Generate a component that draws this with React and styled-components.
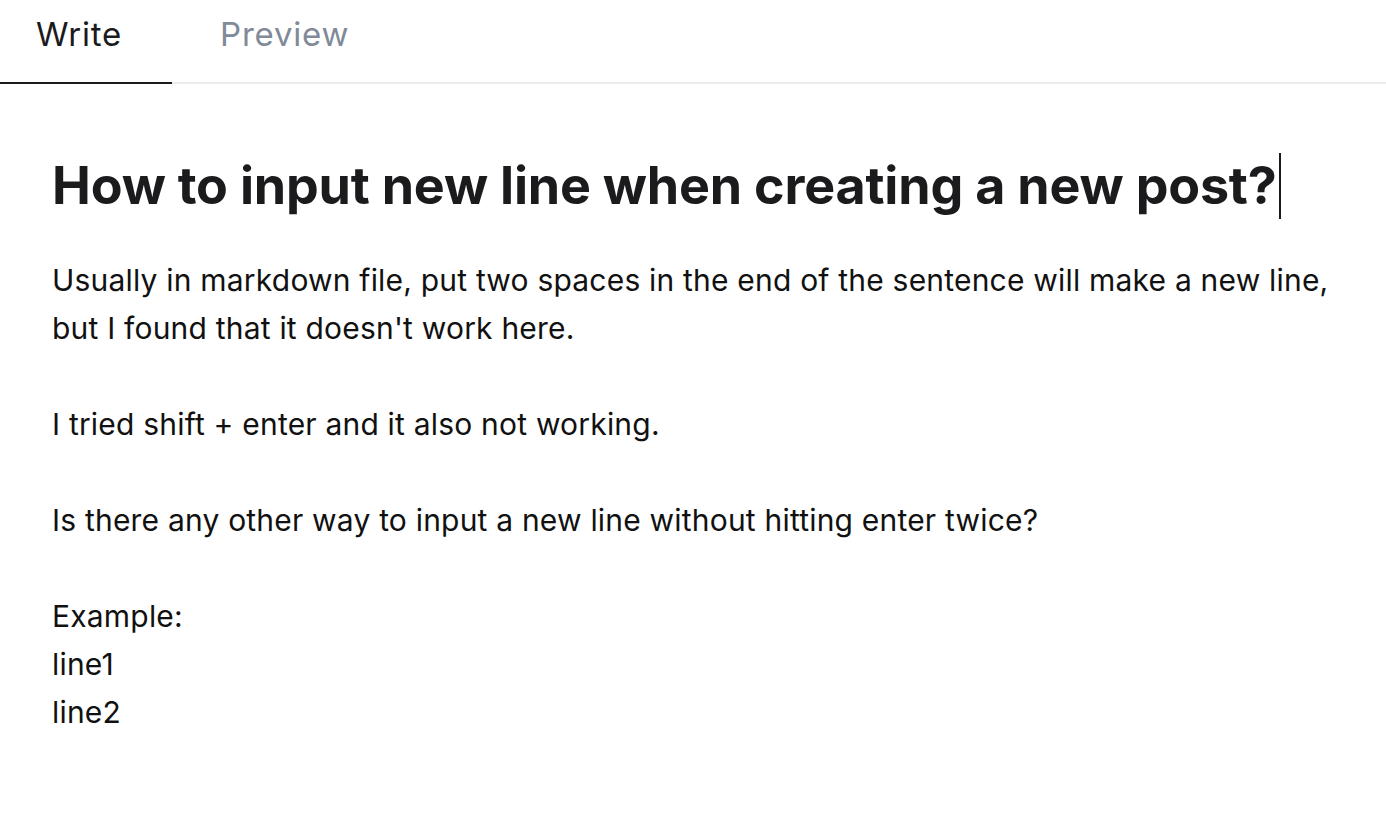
import React from "react";
import styled, { createGlobalStyle } from "styled-components";

const Global = createGlobalStyle`
  html, body { margin: 0; padding: 0; background: #fff; }
  body { font-family: Inter, "Noto Sans", sans-serif; -webkit-font-smoothing: antialiased; }
`;

const Page = styled.div`
  width: 1386px;
  height: 832px;
  background: #fff;
  overflow: hidden;
`;

const TabBar = styled.div`
  display: flex;
  height: 82px;
  border-bottom: 2px solid #ebebeb;
`;

const Tab = styled.div`
  width: ${(p) => p.$w}px;
  display: flex;
  align-items: center;
  box-sizing: border-box;
  padding-left: ${(p) => p.$pl}px;
  padding-bottom: 14px;
  font-size: 33px;
  letter-spacing: 0.8px;
  font-weight: 400;
  color: ${(p) => (p.$active ? "#1b1b1d" : "#808a98")};
  border-bottom: 2px solid ${(p) => (p.$active ? "#1b1b1d" : "transparent")};
  margin-bottom: -2px;
`;

const Body = styled.div`
  padding: 66px 52px 0 52px;
`;

const Title = styled.div`
  font-size: 52px;
  font-weight: 700;
  color: #1b1b1d;
  line-height: 72px;
  letter-spacing: -0.2px;
  display: flex;
  align-items: center;
`;

const Caret = styled.span`
  display: inline-block;
  width: 2px;
  height: 66px;
  background: #1b1b1d;
  margin-left: 2px;
`;

const Content = styled.div`
  margin-top: 34px;
  font-size: 30px;
  letter-spacing: 0.2px;
  line-height: 48px;
  color: #111;
  white-space: pre-wrap;
`;

const text = `Usually in markdown file, put two spaces in the end of the sentence will make a new line,
but I found that it doesn't work here.

I tried shift + enter and it also not working.

Is there any other way to input a new line without hitting enter twice?

Example:
line1
line2`;

export default function App() {
  return (
    <Page>
      <Global />
      <TabBar>
        <Tab $active $w={172} $pl={36}>Write</Tab>
        <Tab $w={226} $pl={48}>Preview</Tab>
      </TabBar>
      <Body>
        <Title>
          How to input new line when creating a new post?
          <Caret />
        </Title>
        <Content>{text}</Content>
      </Body>
    </Page>
  );
}
